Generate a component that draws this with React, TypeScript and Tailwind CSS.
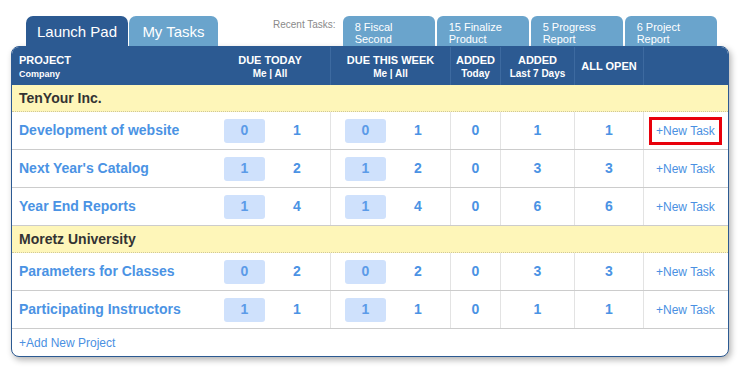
const rows = [
  {
    company: 'TenYour Inc.',
    projects: [
      { name: 'Development of website', today: [0, 1], week: [0, 1], added: 0, last7: 1, open: 1, marked: true },
      { name: "Next Year's Catalog", today: [1, 2], week: [1, 2], added: 0, last7: 3, open: 3 },
      { name: 'Year End Reports', today: [1, 4], week: [1, 4], added: 0, last7: 6, open: 6 },
    ],
  },
  {
    company: 'Moretz University',
    projects: [
      { name: 'Parameters for Classes', today: [0, 2], week: [0, 2], added: 0, last7: 3, open: 3 },
      { name: 'Participating Instructors', today: [1, 1], week: [1, 1], added: 0, last7: 1, open: 1 },
    ],
  },
];

const recent = [
  ['8 Fiscal', 'Second'],
  ['15 Finalize', 'Product'],
  ['5 Progress', 'Report'],
  ['6 Project', 'Report'],
];

const grid = 'grid grid-cols-[198px_120px_120px_50px_74px_69px_85px]';

function DueCell({ pair }: { pair: number[] }) {
  return (
    <div className="flex items-center border-l border-[#e3e3e3] pl-[14px]">
      <div className="flex h-[24px] w-[41px] items-center justify-center rounded-[3px] bg-[#cfe1fc] text-[14px] font-bold text-[#5c9be8]">
        {pair[0]}
      </div>
      <div className="w-[64px] text-center text-[14px] font-bold text-[#4b93e4]">{pair[1]}</div>
    </div>
  );
}

function NumCell({ n }: { n: number }) {
  return (
    <div className="flex items-center justify-center border-l border-[#e3e3e3] text-[14px] font-bold text-[#4b93e4]">
      {n}
    </div>
  );
}

export default function App() {
  return (
    <div className="min-h-[369px] bg-white pl-[11px] pt-[16px] font-['Liberation_Sans',Arial,sans-serif]">
      {/* tabs */}
      <div className="flex h-[30px] w-[718px] pl-[15px]">
        <div className="flex w-[102px] items-center justify-center rounded-t-[7px] bg-[#2c5a92] pt-[2px] text-[15px] text-white">
          Launch Pad
        </div>
        <div className="ml-[1px] flex w-[89px] items-center justify-center rounded-t-[7px] bg-[#6aa4cc] pt-[2px] text-[15px] text-white">
          My Tasks
        </div>
        <div className="ml-[55px] pt-[1px] text-[10px] text-[#8a8a8a]">Recent Tasks:</div>
        <div className="ml-[7px] flex gap-[2px]">
          {recent.map((r, i) => (
            <div
              key={i}
              className="w-[92px] rounded-t-[6px] bg-[#6aa4cc] pl-[12px] pt-[5px] text-[11px] leading-[12px] text-white"
            >
              <div>{r[0]}</div>
              <div>{r[1]}</div>
            </div>
          ))}
        </div>
      </div>

      {/* panel */}
      <div className="w-[718px] overflow-hidden rounded-[8px] border border-[#2c5a92] bg-white shadow-[2px_3px_6px_rgba(0,0,0,0.3)]">
        <div className={`${grid} h-[38px] bg-[#2c5a92] font-bold text-white`}>
          <div className="pl-[7px] pt-[7px]">
            <div className="text-[11px] leading-[13px]">PROJECT</div>
            <div className="mt-[2px] text-[9px] leading-[11px]">Company</div>
          </div>
          <div className="pt-[7px] text-center">
            <div className="text-[11px] leading-[13px]">DUE TODAY</div>
            <div className="mt-[1px] text-[10px] leading-[12px]">Me | All</div>
          </div>
          <div className="border-l border-[#3d6aa0] pt-[7px] text-center">
            <div className="text-[11px] leading-[13px]">DUE THIS WEEK</div>
            <div className="mt-[1px] text-[10px] leading-[12px]">Me | All</div>
          </div>
          <div className="border-l border-[#3d6aa0] pt-[7px] text-center">
            <div className="text-[11px] leading-[13px]">ADDED</div>
            <div className="mt-[1px] text-[10px] leading-[12px]">Today</div>
          </div>
          <div className="border-l border-[#3d6aa0] pt-[7px] text-center">
            <div className="text-[11px] leading-[13px]">ADDED</div>
            <div className="mt-[1px] text-[10px] leading-[12px]">Last 7 Days</div>
          </div>
          <div className="flex items-center justify-center border-l border-[#3d6aa0] text-[11px]">ALL OPEN</div>
          <div className="border-l border-[#3d6aa0]" />
        </div>

        {rows.map(group => (
          <div key={group.company}>
            <div className="flex h-[27px] items-center border-b border-dotted border-[#cfc79a] bg-[#fef6b9] pl-[7px] text-[14px] font-bold text-[#333]">
              {group.company}
            </div>
            {group.projects.map(p => (
              <div key={p.name} className={`${grid} h-[38px] border-b border-[#cccccc]`}>
                <div className="flex items-center pl-[7px] text-[14px] font-bold text-[#4b93e4]">{p.name}</div>
                <div className="flex items-center pl-[14px]">
                  <div className="flex h-[24px] w-[41px] items-center justify-center rounded-[3px] bg-[#cfe1fc] text-[14px] font-bold text-[#5c9be8]">
                    {p.today[0]}
                  </div>
                  <div className="w-[64px] text-center text-[14px] font-bold text-[#4b93e4]">{p.today[1]}</div>
                </div>
                <DueCell pair={p.week} />
                <NumCell n={p.added} />
                <NumCell n={p.last7} />
                <NumCell n={p.open} />
                <div className="flex items-center border-l border-[#e3e3e3] pl-[5px]">
                  <span
                    className={`border-[3px] px-[4px] py-[3px] text-[12px] leading-[16px] text-[#4a90e2] ${
                      p.marked ? 'border-[#e8000b]' : 'border-transparent'
                    }`}
                  >
                    +New Task
                  </span>
                </div>
              </div>
            ))}
          </div>
        ))}

        <div className="flex h-[27px] items-center pl-[7px] text-[12px] text-[#4a90e2]">+Add New Project</div>
      </div>
    </div>
  );
}
